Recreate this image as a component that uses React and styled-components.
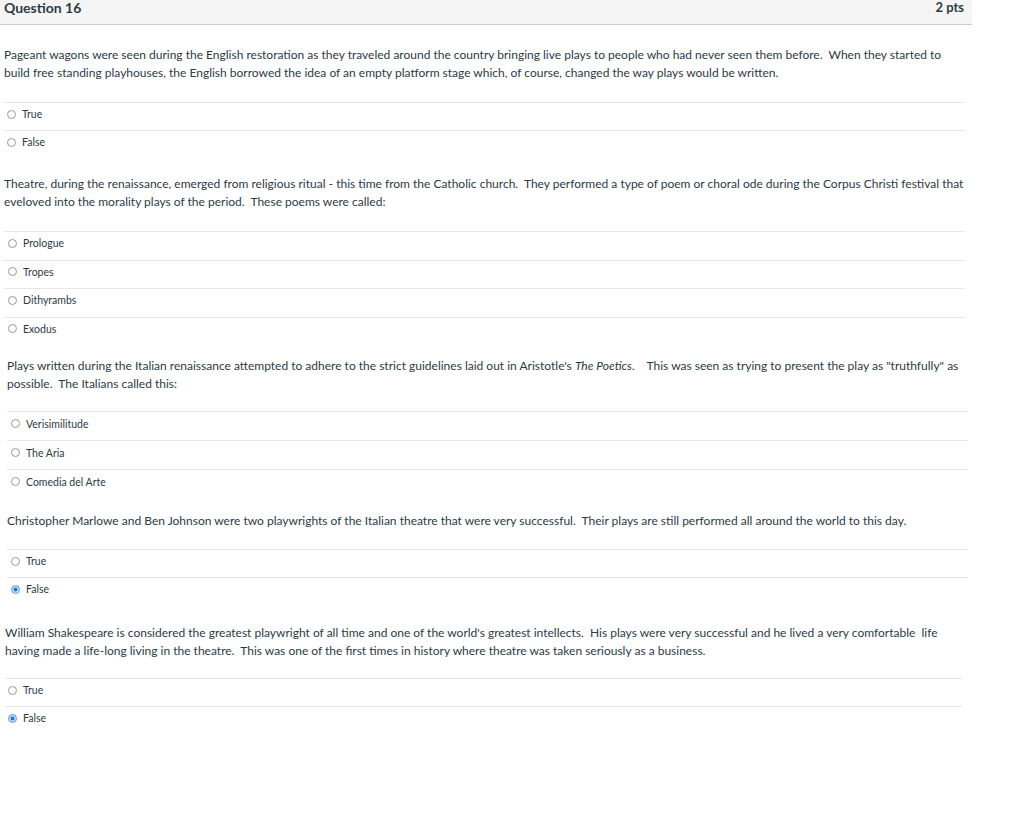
import React from "react";
import styled, { createGlobalStyle } from "styled-components";

const GlobalStyle = createGlobalStyle`
  html, body {
    margin: 0;
    padding: 0;
    background: #ffffff;
  }
  body {
    font-family: Lato, "Open Sans", "Liberation Sans", sans-serif;
    color: #2d3b45;
  }
`;

const Page = styled.div`
  width: 1024px;
  height: 830px;
  overflow: hidden;
  background: #fff;
`;

const Header = styled.div`
  width: 972px;
  height: 25px;
  box-sizing: border-box;
  background: #f5f5f5;
  border-bottom: 1px solid #c7cdd1;
  display: flex;
  justify-content: space-between;
  align-items: flex-start;
  padding: 0 8px 0 4px;
`;

const Title = styled.div`
  font-size: 14px;
  font-weight: 700;
  line-height: 15px;
  color: #2d3b45;
`;

const Points = styled.div`
  font-size: 13px;
  font-weight: 700;
  line-height: 15px;
  color: #2d3b45;
`;

const Block = styled.section`
  margin-top: ${(p) => p.$top}px;
  margin-left: ${(p) => p.$left}px;
  width: ${(p) => p.$width}px;
`;

const QuestionText = styled.div`
  font-size: 12px;
  line-height: 18px;
  white-space: nowrap;
  margin-bottom: ${(p) => p.$gap}px;

  & > div {
    height: 18px;
  }
`;

const Answers = styled.div`
  display: flex;
  flex-direction: column;
`;

const Answer = styled.label`
  display: flex;
  align-items: center;
  gap: 6px;
  height: ${(p) => p.$h}px;
  box-sizing: border-box;
  border-top: 1px solid #e4e6e8;
  padding-left: ${(p) => p.$indent}px;
  padding-bottom: 5px;
  font-size: 10.5px;
  color: #2d3b45;
`;

const Radio = styled.span`
  width: 9px;
  height: 9px;
  box-sizing: border-box;
  border-radius: 50%;
  border: 1px solid ${(p) => (p.$checked ? "#7db3f0" : "#9a9a9a")};
  background: ${(p) => (p.$checked ? "#1a73e8" : "#fff")};
  box-shadow: ${(p) => (p.$checked ? "inset 0 0 0 1.5px #cfe3fb" : "none")};
  flex: none;
`;

const questions = [
  {
    top: 21,
    left: 4,
    width: 961,
    rowH: 28,
    indent: 3,
    gap: 20,
    lines: [
      "Pageant wagons were seen during the English restoration as they traveled around the country bringing live plays to people who had never seen them before.\u00a0 When they started to",
      "build free standing playhouses, the English borrowed the idea of an empty platform stage which, of course, changed the way plays would be written.",
    ],
    answers: [{ text: "True" }, { text: "False" }],
  },
  {
    top: 17,
    left: 4,
    width: 961,
    rowH: 28.5,
    indent: 4,
    gap: 20,
    lines: [
      "Theatre, during the renaissance, emerged from religious ritual - this time from the Catholic church.\u00a0 They performed a type of poem or choral ode during the Corpus Christi festival that",
      "eveloved into the morality plays of the period.\u00a0 These poems were called:",
    ],
    answers: [
      { text: "Prologue" },
      { text: "Tropes" },
      { text: "Dithyrambs" },
      { text: "Exodus" },
    ],
  },
  {
    top: 12,
    left: 7,
    width: 961,
    rowH: 29,
    indent: 4,
    gap: 18,
    lines: [
      <>
        Plays written during the Italian renaissance attempted to adhere to the strict guidelines laid out in Aristotle's{" "}
        <i>The Poetics</i>.{"\u00a0\u00a0\u00a0 "}This was seen as trying to present the play as "truthfully" as
      </>,
      "possible.\u00a0 The Italians called this:",
    ],
    answers: [
      { text: "Verisimilitude" },
      { text: "The Aria" },
      { text: "Comedia del Arte" },
    ],
  },
  {
    top: 14,
    left: 7,
    width: 961,
    rowH: 28,
    indent: 4,
    gap: 19,
    lines: [
      "Christopher Marlowe and Ben Johnson were two playwrights of the Italian theatre that were very successful.\u00a0 Their plays are still performed all around the world to this day.",
    ],
    answers: [{ text: "True" }, { text: "False", checked: true }],
  },
  {
    top: 19,
    left: 5,
    width: 957,
    rowH: 28,
    indent: 3,
    gap: 18,
    lines: [
      "William Shakespeare is considered the greatest playwright of all time and one of the world's greatest intellects.\u00a0 His plays were very successful and he lived a very comfortable\u00a0 life",
      "having made a life-long living in the theatre.\u00a0 This was one of the first times in history where theatre was taken seriously as a business.",
    ],
    answers: [{ text: "True" }, { text: "False", checked: true }],
  },
];

const Question = ({ q }) => (
  <Block $top={q.top} $left={q.left} $width={q.width}>
    <QuestionText $gap={q.gap}>
      {q.lines.map((line, i) => (
        <div key={i}>{line}</div>
      ))}
    </QuestionText>
    <Answers>
      {q.answers.map((a) => (
        <Answer key={a.text} $h={q.rowH} $indent={q.indent}>
          <Radio $checked={a.checked} />
          <span>{a.text}</span>
        </Answer>
      ))}
    </Answers>
  </Block>
);

export default function App() {
  return (
    <Page>
      <GlobalStyle />
      <Header>
        <Title>Question 16</Title>
        <Points>2 pts</Points>
      </Header>
      {questions.map((q, i) => (
        <Question key={i} q={q} />
      ))}
    </Page>
  );
}
